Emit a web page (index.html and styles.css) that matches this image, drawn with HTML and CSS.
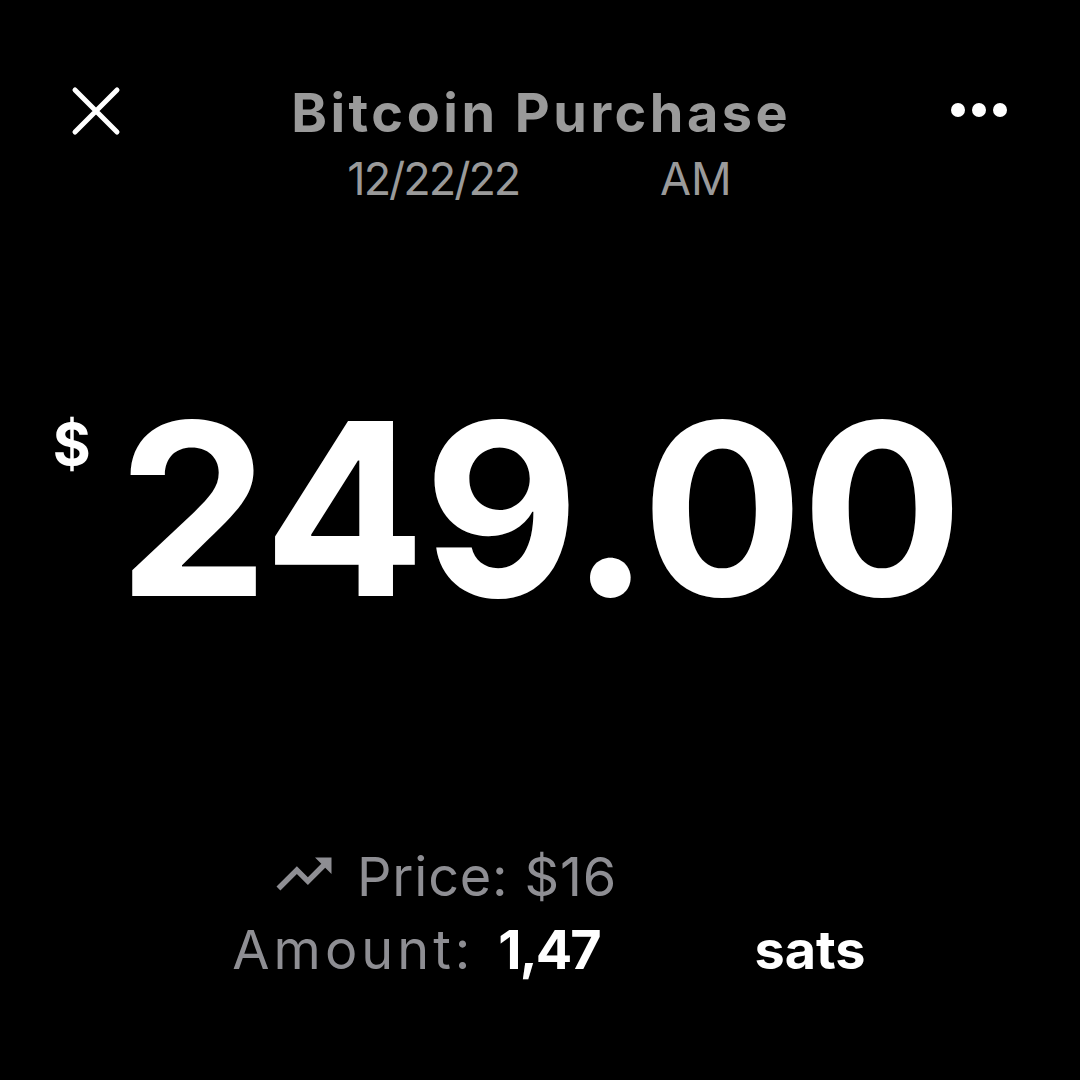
FILE: index.html
```html
<!DOCTYPE html>
<html lang="en">
<head>
<meta charset="utf-8">
<title>Bitcoin Purchase</title>
<link rel="stylesheet" href="styles.css">
</head>
<body>
<main class="screen">
  <header class="topbar">
    <button class="icon-btn close" aria-label="Close">
      <svg width="50" height="50" viewBox="0 0 50 50"><path d="M4 4 L46 46 M46 4 L4 46" stroke="#fff" stroke-width="5" stroke-linecap="round" fill="none"/></svg>
    </button>
    <div class="title-block">
      <h1 class="title">Bitcoin Purchase</h1>
      <p class="date"><span class="date-day">12/22/22</span>&nbsp;<span class="redact redact-time"></span>AM</p>
    </div>
    <button class="icon-btn more" aria-label="More">
      <svg width="58" height="16" viewBox="0 0 58 16"><circle cx="8" cy="8" r="7" fill="#fff"/><circle cx="29" cy="8" r="7" fill="#fff"/><circle cx="50" cy="8" r="7" fill="#fff"/></svg>
    </button>
  </header>

  <section class="amount">
    <span class="currency">$</span>
    <span class="value">249.00</span>
  </section>

  <section class="details">
    <p class="detail-line price">
      <svg class="trend" width="66" height="66" viewBox="0 0 24 24"><path d="M16 6l2.29 2.29-4.88 4.88-4-4L2 16.59 3.41 18l6-6 4 4 6.3-6.29L22 12V6z" fill="#8e8e93"/></svg>
      <span class="price-text">Price: $16</span><span class="redact redact-price"></span>
    </p>
    <p class="detail-line amount-line">
      <span class="amount-label">Amount:</span><span class="gap"></span><strong class="strong sats-num">1,47</strong><span class="redact redact-sats"></span><strong class="strong">&nbsp;sats</strong>
    </p>
  </section>
</main>
</body>
</html>
```

FILE: styles.css
```css
* { box-sizing: border-box; }
html, body {
  margin: 0;
  padding: 0;
  background: #000;
}
body {
  width: 1080px;
  height: 1080px;
  overflow: hidden;
  font-family: "Inter", "Noto Sans", sans-serif;
  color: #fff;
}
.screen {
  display: flex;
  flex-direction: column;
  width: 1080px;
  height: 1080px;
}
.topbar {
  display: grid;
  grid-template-columns: 1fr auto 1fr;
  align-items: start;
  padding: 81px 72px 0 71px;
}
.icon-btn {
  background: none;
  border: 0;
  padding: 0;
  display: flex;
}
.close {
  justify-self: start;
  margin-top: 5px;
}
.more {
  justify-self: end;
  margin-top: 21px;
}
.title-block {
  display: flex;
  flex-direction: column;
  align-items: center;
}
.title {
  margin: 0;
  font-size: 54px;
  line-height: 64px;
  font-weight: 700;
  color: #9a9a9a;
  letter-spacing: 3.5px;
  padding-left: 3.5px;
}
.date {
  margin: 6px 0 0;
  font-size: 45px;
  line-height: 56px;
  font-weight: 400;
  color: #9a9a9a;
  display: flex;
  align-items: center;
}
.date-day {
  letter-spacing: -2px;
}
.redact {
  display: inline-block;
  height: 1em;
}
.redact-time { width: 128px; }
.redact-price { width: 192px; }
.redact-sats { width: 142px; }

.amount {
  display: flex;
  justify-content: center;
  align-items: flex-start;
  margin-top: 182px;
  padding-right: 66px;
}
.currency {
  font-size: 58px;
  line-height: 58px;
  font-weight: 700;
  margin-top: 26px;
  margin-right: 27px;
}
.value {
  font-size: 240px;
  line-height: 240px;
  font-weight: 700;
  letter-spacing: -2px;
}
.details {
  display: flex;
  flex-direction: column;
  align-items: center;
  margin-top: 211px;
}
.detail-line {
  margin: 0;
  font-size: 54px;
  line-height: 73px;
  color: #8e8e93;
  display: flex;
  align-items: center;
  white-space: nowrap;
}
.trend {
  margin-right: 20px;
  margin-top: -6px;
}
.price-text {
  letter-spacing: 0.8px;
}
.amount-line {
  padding-left: 18px;
}
.amount-label {
  letter-spacing: 4px;
}
.gap {
  display: inline-block;
  width: 24px;
}
.sats-num {
  letter-spacing: -2px;
}
.strong {
  color: #fff;
  font-weight: 700;
}
```
